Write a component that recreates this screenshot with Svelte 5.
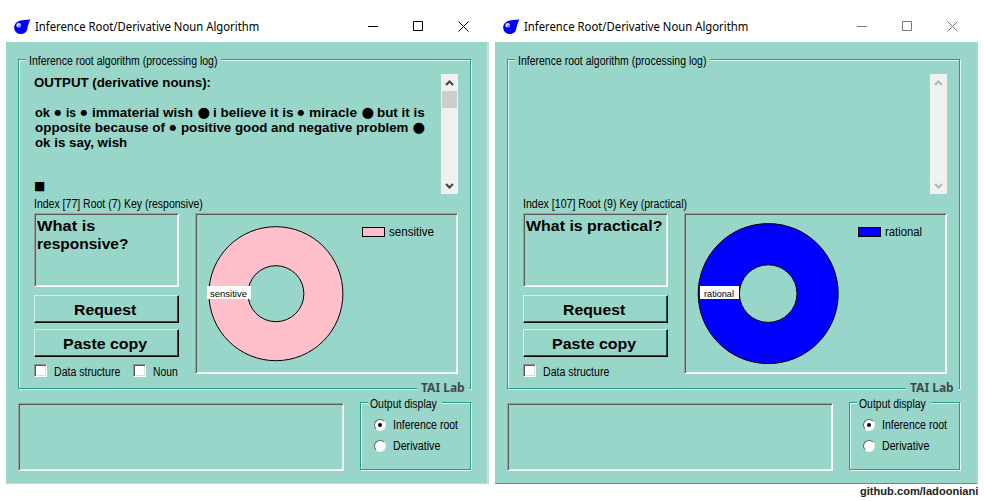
<script>
  const windows = [
    {
      active: true,
      heading: ['OUTPUT (derivative nouns):', 177],
      log: [
        [['ok', 15], ['•'], ['is', 10], ['•'], ['immaterial wish', 101], ['●'], ['i believe it is', 80], ['•'], ['miracle', 48], ['●'], ['but it is', 48]],
        [['opposite because of', 130], ['•'], ['positive good and negative problem', 227], ['●']],
        [['ok is say, wish', 92]]
      ],
      index: ['Index [77] Root (7) Key (responsive)', 169],
      question: [['What is', 58], ['responsive?', 91]],
      checks: [['Data structure', 66], ['Noun', 25]],
      chart: { color: '#ffc0cb', cx: 78.9, cy: 78.7, r: 67, hole: 28, label: 'sensitive', labelWidth: 37, boxX: 10, boxW: 44, legendX: 165, legendWidth: 45 }
    },
    {
      active: false,
      heading: null,
      log: [],
      index: ['Index [107] Root (9) Key (practical)', 164],
      question: [['What is practical?', 136]],
      checks: [['Data structure', 66]],
      chart: { color: '#0000ff', cx: 82.2, cy: 78.6, r: 70, hole: 28.8, label: 'rational', labelWidth: 30, boxX: 14, boxW: 39, legendX: 172, legendWidth: 37 }
    }
  ];

  // Scales a label horizontally so that it fills its column.
  function fit(node, width) {
    node.style.transform = `scaleX(${width / node.offsetWidth})`;
  }
</script>

{#snippet label(text, width)}
  <span class="label" style="width:{width}px"><span class="glyphs" use:fit={width}>{text}</span></span>
{/snippet}

<main>
  <div class="windows">
    {#each windows as w}
      <section class="window" class:inactive={!w.active}>
        <header>
          <svg class="logo" width="17" height="16" viewBox="0 0 17 16">
            <path d="M16.4 .5 C11.5 .7 8.5 1 6 1.7 C2.4 2.6 .2 5.2 .2 8.5 C.2 12.3 3 15 6.9 15 C10.7 15 13.2 12.4 13.5 9 C13.8 6.2 14.9 3.8 16.4 .5Z" fill="#0000ff" />
            <circle cx="4.7" cy="6.2" r="2.3" fill="#dfe4ff" />
            <circle cx="5.4" cy="6.9" r="1.2" fill="#6f80ff" />
          </svg>
          <div class="title">{@render label('Inference Root/Derivative Noun Algorithm', 224)}</div>
          <svg class="controls" width="102" height="12" viewBox="0 0 102 12" fill="none" stroke="currentColor">
            <path d="M0 5.5H10M45.5 .5H54.5V9.5H45.5ZM90.5 .5L100.5 10.5M100.5 .5L90.5 10.5" />
          </svg>
        </header>

        <div class="body">
          <div class="group main-group">
            <div class="legend top">{@render label('Inference root algorithm (processing log)', 188)}</div>
            <div class="log">
              <div class="log-text">
                {#if w.heading}
                  <div class="heading">{@render label(w.heading[0], w.heading[1])}</div>
                {/if}
                {#each w.log as line}
                  <div class="line">
                    {#each line as [text, width]}
                      {#if width}{@render label(text, width)}
                      {:else}<span class="dot" class:big={text === '●'}>●</span>{/if}
                    {/each}
                  </div>
                {/each}
                {#if w.heading}<div class="square">■</div>{/if}
              </div>
              <div class="scroll">
                <svg width="17" height="17"><path d="M5 11L8.5 7.5L12 11" /></svg>
                {#if w.active}<div class="thumb"></div>{/if}
                <svg class="down" width="17" height="17"><path d="M5 7L8.5 10.5L12 7" /></svg>
              </div>
            </div>
            <div class="index">{@render label(w.index[0], w.index[1])}</div>
            <div class="columns">
              <div class="left">
                <div class="sunken question">
                  {#each w.question as [text, width]}<div>{@render label(text, width)}</div>{/each}
                </div>
                <button>{@render label('Request', 62)}</button>
                <button>{@render label('Paste copy', 84)}</button>
                <div class="checks">
                  {#each w.checks as [text, width]}
                    <div class="check"><i class="box"></i>{@render label(text, width)}</div>
                  {/each}
                </div>
              </div>
              <div class="sunken chart">
                <svg width="259" height="157" viewBox="2 2 259 157">
                  <circle cx={w.chart.cx + 2} cy={w.chart.cy + 2} r={(w.chart.r + w.chart.hole) / 2} fill="none" stroke={w.chart.color} stroke-width={w.chart.r - w.chart.hole} />
                  <circle cx={w.chart.cx + 2} cy={w.chart.cy + 2} r={w.chart.r} fill="none" stroke="#000" />
                  <circle cx={w.chart.cx + 2} cy={w.chart.cy + 2} r={w.chart.hole} fill="none" stroke="#000" />
                  <rect x={w.chart.boxX + 2} y="73" width={w.chart.boxW} height="13" fill="#fff" />
                  <text x={w.chart.boxX + 1.5 + (w.chart.boxW - w.chart.labelWidth) / 2} y="84" font-size="9.5" textLength={w.chart.labelWidth} lengthAdjust="spacingAndGlyphs">{w.chart.label}</text>
                  <rect x={w.chart.legendX + 2.5} y="14.5" width="22" height="9" fill={w.chart.color} stroke="#000" />
                  <text x={w.chart.legendX + 29} y="23" font-size="12" textLength={w.chart.legendWidth} lengthAdjust="spacingAndGlyphs">{w.chart.label}</text>
                </svg>
              </div>
            </div>
            <div class="lab">{@render label('TAI Lab', 44)}</div>
          </div>

          <div class="bottom">
            <div class="sunken input"></div>
            <div class="group display">
              <div class="legend">{@render label('Output display', 67)}</div>
              <div class="radio"><i class="ring on"></i>{@render label('Inference root', 65)}</div>
              <div class="radio"><i class="ring"></i>{@render label('Derivative', 47)}</div>
            </div>
          </div>
        </div>
      </section>
    {/each}
  </div>
  <footer>{@render label('github.com/ladooniani', 118)}</footer>
</main>

<style>
  :global(body) { margin: 0; background: #fff; overflow: hidden; }
  * { box-sizing: border-box; }
  main { width: 984px; height: 501px; background: #fff; font: 12px/14px "Liberation Sans", Arial, sans-serif; color: #000; }
  .windows { display: flex; gap: 6px; padding: 11px 0 0 6px; }
  .window { width: 483px; }
  svg { display: block; flex: none; }
  .label { display: block; flex: none; white-space: pre; }
  .glyphs { display: block; width: max-content; transform-origin: 0 50%; }
  header { height: 31px; display: flex; align-items: center; padding-left: 8px; font-family: "Noto Sans", sans-serif; font-size: 12px; }
  .title { margin-left: 4px; line-height: 16px; }
  .controls { margin-left: 109px; }
  .inactive .controls { color: #777; }
  .body { height: 442px; background: #98d6ca; padding: 17px 16px 0 12px; border-right: 2px solid #b9e6df; border-bottom: 1px solid #a9dfd5; }
  .inactive .body { border-bottom-color: #668f88; border-right-color: #9edacf; }
  .group { position: relative; border: 1px solid #259d87; box-shadow: 1px 1px #e4f6f2, inset 1px 1px #e4f6f2; }
  .main-group { width: 453px; height: 330px; padding: 14px 12px 0 15px; }
  .legend { position: absolute; top: -6px; left: 7px; padding: 0 5px 0 2px; background: #98d6ca; }
  .legend.top { padding: 0 4px 0 3px; }
  .log { display: flex; justify-content: space-between; height: 120px; }
  .log-text { font-weight: bold; line-height: 15px; }
  .heading { height: 32px; padding-top: 2px; }
  .line { display: flex; gap: 4.5px; padding-left: 1px; height: 15px; }
  .dot { flex: none; width: 7px; font: 8px/14px "DejaVu Sans", sans-serif; }
  .dot.big { width: 11px; font-size: 14.5px; line-height: 12px; }
  .square { font: 12px/15px "DejaVu Sans", sans-serif; margin-top: 28px; }
  .scroll { width: 17px; background: #f0f0f0; display: flex; flex-direction: column; }
  .scroll path { fill: none; stroke: #444; stroke-width: 2; }
  .inactive .scroll path { stroke: #b5b5b5; }
  .thumb { height: 17px; margin: 0 1px; background: #cdcdcd; }
  .down { margin-top: auto; }
  .index { height: 19px; padding-top: 3px; }
  .columns { display: flex; gap: 16px; }
  .sunken { border: 1px solid; border-color: #a49a9a #fff #fff #a49a9a; box-shadow: inset 1px 1px #655458, inset -1px -1px #e9f1f0; }
  .left { width: 145px; }
  .question { height: 74px; padding: 3px 2px; font-weight: bold; font-size: 15px; line-height: 18px; margin-bottom: 8px; }
  button { display: flex; justify-content: center; align-items: center; width: 145px; height: 28px; margin: 0 0 6px; padding: 2px 4px 0 0; border: 1px solid; border-color: #cff2eb #000 #000 #cff2eb; box-shadow: inset -1px -1px #16574b; background: #98d6ca; color: #000; font: bold 15px/18px "Liberation Sans", Arial, sans-serif; }
  .checks { display: flex; gap: 13px; padding-top: 1px; }
  .check { display: flex; gap: 7px; line-height: 16px; }
  .box { width: 13px; height: 13px; background: #fff; border: 1px solid; border-color: #968f8f #fff #fff #968f8f; box-shadow: inset 1px 1px #655458, inset -1px -1px #ddd; }
  .chart { flex: none; width: 263px; height: 161px; padding: 1px; }
  .lab { position: absolute; right: 1px; bottom: -7px; padding: 0 4px; background: #98d6ca; font: bold 12px/14px "Noto Sans", sans-serif; color: #3f4b4b; }
  .bottom { display: flex; gap: 16px; margin-top: 13px; padding-top: 1px; }
  .input { width: 326px; height: 68px; }
  .display { width: 111px; height: 68px; margin-top: -1px; padding: 13px 0 0 13px; }
  .radio { display: flex; gap: 7px; height: 21px; line-height: 18px; align-items: center; padding-bottom: 3px; }
  .ring { width: 12px; height: 12px; border-radius: 50%; background: #fff; border: 1px solid; border-color: #6b6262 #f5f5f5 #f5f5f5 #6b6262; display: grid; place-items: center; }
  .ring.on::after { content: ""; width: 4px; height: 4px; border-radius: 50%; background: #000; }
  footer { padding-left: 860px; font-weight: bold; font-size: 11px; color: #222; }
</style>
